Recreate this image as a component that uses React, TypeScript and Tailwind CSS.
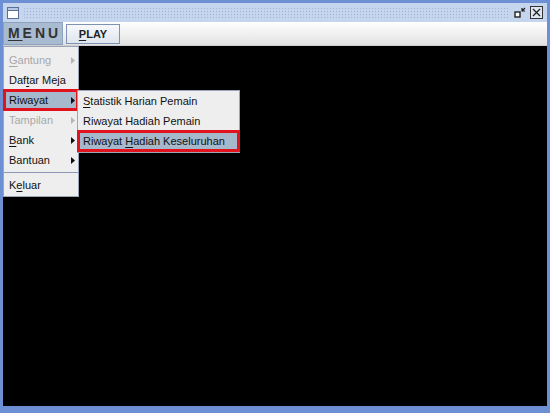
import React from "react";

type Item = {
  label: React.ReactNode;
  disabled?: boolean;
  arrow?: boolean;
  active?: boolean;
};

const font = { fontFamily: '"Liberation Sans", Arial, sans-serif' };

function U({ children }: { children: React.ReactNode }) {
  return <span className="underline underline-offset-2">{children}</span>;
}

function Arrow({ disabled }: { disabled?: boolean }) {
  return (
    <svg width="4" height="7" viewBox="0 0 4 7" className="shrink-0">
      <path d="M0 0L4 3.5L0 7Z" fill={disabled ? "#b5b5b5" : "#111"} />
    </svg>
  );
}

function MenuRow({ item }: { item: Item }) {
  return (
    <div
      className={`flex items-center justify-between h-[20px] pl-[5px] pr-[3px] text-[11px] whitespace-nowrap ${
        item.active
          ? "bg-[#a6b8cc] text-[#111] outline-[3px] outline-[#e2131c] -outline-offset-2"
          : item.disabled
          ? "text-[#a8a8a8]"
          : "text-[#111]"
      }`}
    >
      <span>{item.label}</span>
      {item.arrow && <Arrow disabled={item.disabled} />}
    </div>
  );
}

function TitleBar() {
  return (
    <div className="flex items-center h-[19px] bg-[#c5d5ee] px-[4px] gap-[4px]">
      <div className="w-[12px] h-[12px] border border-[#5a6f96] bg-white flex flex-col">
        <div className="h-[3px] bg-[#b8c8e4] border-b border-[#5a6f96]" />
      </div>
      <div className="flex-1 h-[11px] bg-[radial-gradient(#9fb2d6_0.7px,transparent_0.8px)] bg-[length:3px_3px]" />
      <svg width="12" height="12" viewBox="0 0 12 12">
        <rect x="1" y="5" width="5" height="5" fill="#fff" stroke="#222" strokeWidth="1.4" />
        <path d="M8 1L8 4L11 4M8 4L11 1" stroke="#222" strokeWidth="1.2" fill="none" />
      </svg>
      <svg width="13" height="13" viewBox="0 0 13 13">
        <rect x="0.5" y="0.5" width="12" height="12" fill="#dfe6f3" stroke="#333" />
        <path d="M3 3L10 10M10 3L3 10" stroke="#222" strokeWidth="1.3" />
      </svg>
    </div>
  );
}

function MenuBar() {
  return (
    <div className="flex items-stretch h-[24px] bg-gradient-to-b from-[#ffffff] to-[#e2e2e2] border-b border-[#cfcfcf]">
      <div className="w-[60px] flex items-center justify-center bg-[#a9bbd0] border border-[#8ea2bb] text-[14px] font-bold tracking-[3px] pl-[3px] text-[#333]">
        <U>M</U>ENU
      </div>
      <div className="ml-[3px] mt-[2px] mb-[1px] w-[54px] flex items-center justify-center border border-[#7e93b3] bg-gradient-to-b from-[#f7f9fc] to-[#dfe5ee] text-[11px] font-bold text-[#222]">
        <U>P</U>LAY
      </div>
    </div>
  );
}

export default function App() {
  const mainItems: Item[] = [
    { label: <><U>G</U>antung</>, disabled: true, arrow: true },
    { label: <>Daf<U>t</U>ar Meja</> },
    { label: "Riwayat", arrow: true, active: true },
    { label: "Tampilan", disabled: true, arrow: true },
    { label: <><U>B</U>ank</>, arrow: true },
    { label: "Bantuan", arrow: true },
  ];
  const subItems: Item[] = [
    { label: <><U>S</U>tatistik Harian Pemain</> },
    { label: "Riwayat Hadiah Pemain" },
    { label: <>Riwayat <U>H</U>adiah Keseluruhan</>, active: true },
  ];

  return (
    <div
      className="w-[550px] h-[413px] bg-[#6d8fd3] pt-[3px] px-[3px] pb-[7px] flex flex-col"
      style={font}
    >
      <TitleBar />
      <MenuBar />
      <div className="relative flex-1 bg-black">
        <div className="absolute left-0 top-0 w-[76px] bg-[#eeeeee] border border-[#9aa6b8] pt-[3px] pb-[1px]">
          {mainItems.map((it, i) => (
            <MenuRow key={i} item={it} />
          ))}
          <div className="my-[2px] h-[1px] bg-[#8a9ab5]" />
          <MenuRow item={{ label: <>K<U>e</U>luar</> }} />
        </div>
        <div className="absolute left-[74px] top-[44px] w-[163px] bg-[#eeeeee] border border-[#9aa6b8] pb-[1px]">
          {subItems.map((it, i) => (
            <MenuRow key={i} item={it} />
          ))}
        </div>
      </div>
    </div>
  );
}
